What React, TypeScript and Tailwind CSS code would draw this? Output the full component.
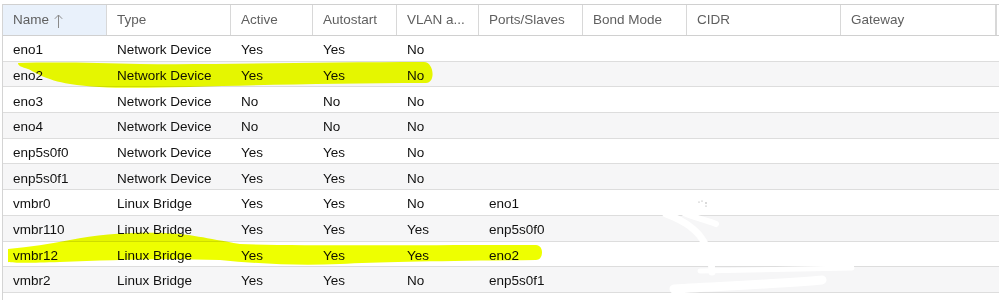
import React from "react";

const columns = [
  { label: "Name", w: "w-[104px]", sorted: true },
  { label: "Type", w: "w-[124px]" },
  { label: "Active", w: "w-[82px]" },
  { label: "Autostart", w: "w-[84px]" },
  { label: "VLAN a...", w: "w-[82px]" },
  { label: "Ports/Slaves", w: "w-[104px]" },
  { label: "Bond Mode", w: "w-[104px]" },
  { label: "CIDR", w: "w-[154px]" },
  { label: "Gateway", w: "w-[155px]" },
];

const rows = [
  ["eno1", "Network Device", "Yes", "Yes", "No", ""],
  ["eno2", "Network Device", "Yes", "Yes", "No", ""],
  ["eno3", "Network Device", "No", "No", "No", ""],
  ["eno4", "Network Device", "No", "No", "No", ""],
  ["enp5s0f0", "Network Device", "Yes", "Yes", "No", ""],
  ["enp5s0f1", "Network Device", "Yes", "Yes", "No", ""],
  ["vmbr0", "Linux Bridge", "Yes", "Yes", "No", "eno1"],
  ["vmbr110", "Linux Bridge", "Yes", "Yes", "Yes", "enp5s0f0"],
  ["vmbr12", "Linux Bridge", "Yes", "Yes", "Yes", "eno2"],
  ["vmbr2", "Linux Bridge", "Yes", "Yes", "No", "enp5s0f1"],
];

function SortArrow() {
  return (
    <svg width="9" height="15" viewBox="0 0 9 15" className="ml-[5px] mt-[1px]">
      <path d="M4.5 1 V14 M0.8 4.8 L4.5 1 L8.2 4.8" fill="none" stroke="#8a8a8a" strokeWidth="1" />
    </svg>
  );
}

function Scribbles() {
  // hand-drawn annotations on top of the grid
  return (
    <svg className="absolute inset-0 pointer-events-none" width="999" height="300" viewBox="0 0 999 300">
      <g className="mix-blend-multiply">
        <path
          d="M18,63 C60,62 100,63 140,64 C220,65 320,62 424,62 C434,62 436,83 426,83 C340,83 260,85 190,87 C140,88 100,89 70,84 C45,80 35,72 28,69 C22,67 18,66 18,63 Z"
          fill="#eeff00"
        />
        <path
          d="M8,249 C30,247 50,244 70,240 C100,234 130,232 165,233 C190,234 205,238 240,244 C300,246 420,245 536,245 C544,245 544,260 536,260 C440,261 380,262 340,264 C300,266 260,264 220,260 C160,258 110,260 60,262 C30,263 14,263 8,262 Z"
          fill="#eeff00"
        />
      </g>
      <g fill="none" stroke="#ffffff" strokeLinecap="round">
        <path d="M666,214 C688,222 700,232 706,246 C711,258 712,266 712,272" strokeWidth="7" />
        <path d="M684,213 C698,219 710,221 716,224" strokeWidth="6" />
        <path d="M674,289 C720,286 780,284 822,280" strokeWidth="9" />
        <path d="M700,271 L852,268" strokeWidth="5" />
      </g>
      <g fill="#9a9a9a">
        <circle cx="699" cy="202" r="0.6" />
        <circle cx="702" cy="201" r="0.6" />
        <circle cx="706" cy="203" r="0.7" />
        <circle cx="706" cy="206" r="0.6" />
      </g>
    </svg>
  );
}

export default function App() {
  return (
    <div className="relative w-[999px] h-[300px] overflow-hidden bg-white font-['Liberation_Sans',Arial,sans-serif] text-[13.5px]">
      <div className="pt-[4px] pl-[2px]">
        <div className="border-l border-[#d4d4d4] h-[296px]">
          {/* header */}
          <div className="flex h-[32px] border-t border-b border-[#d0d0d0] text-[#5f5f5f]">
            {columns.map((c) => (
              <div
                key={c.label}
                className={`${c.w} shrink-0 flex items-center pl-[10px] pt-[1px] border-r border-[#d8d8d8] ${
                  c.sorted ? "bg-[#e9f1fb]" : "bg-white"
                }`}
              >
                <span className="whitespace-nowrap">{c.label}</span>
                {c.sorted && <SortArrow />}
              </div>
            ))}
            <div className="w-[1px] shrink-0 border-r border-[#d8d8d8]" />
          </div>

          {/* rows */}
          {rows.map((r, i) => (
            <div
              key={r[0]}
              className={`flex h-[25.7px] items-center pt-[4px] border-b border-[#dddddd] text-[#111111] ${
                i % 2 === 1 ? "bg-[#f6f6f7]" : "bg-white"
              }`}
            >
              <div className="w-[104px] shrink-0 pl-[10px]">{r[0]}</div>
              <div className="w-[124px] shrink-0 pl-[10px]">{r[1]}</div>
              <div className="w-[82px] shrink-0 pl-[10px]">{r[2]}</div>
              <div className="w-[84px] shrink-0 pl-[10px]">{r[3]}</div>
              <div className="w-[82px] shrink-0 pl-[10px]">{r[4]}</div>
              <div className="w-[104px] shrink-0 pl-[10px]">{r[5]}</div>
              <div className="flex-1" />
            </div>
          ))}
        </div>
      </div>
      <Scribbles />
    </div>
  );
}
